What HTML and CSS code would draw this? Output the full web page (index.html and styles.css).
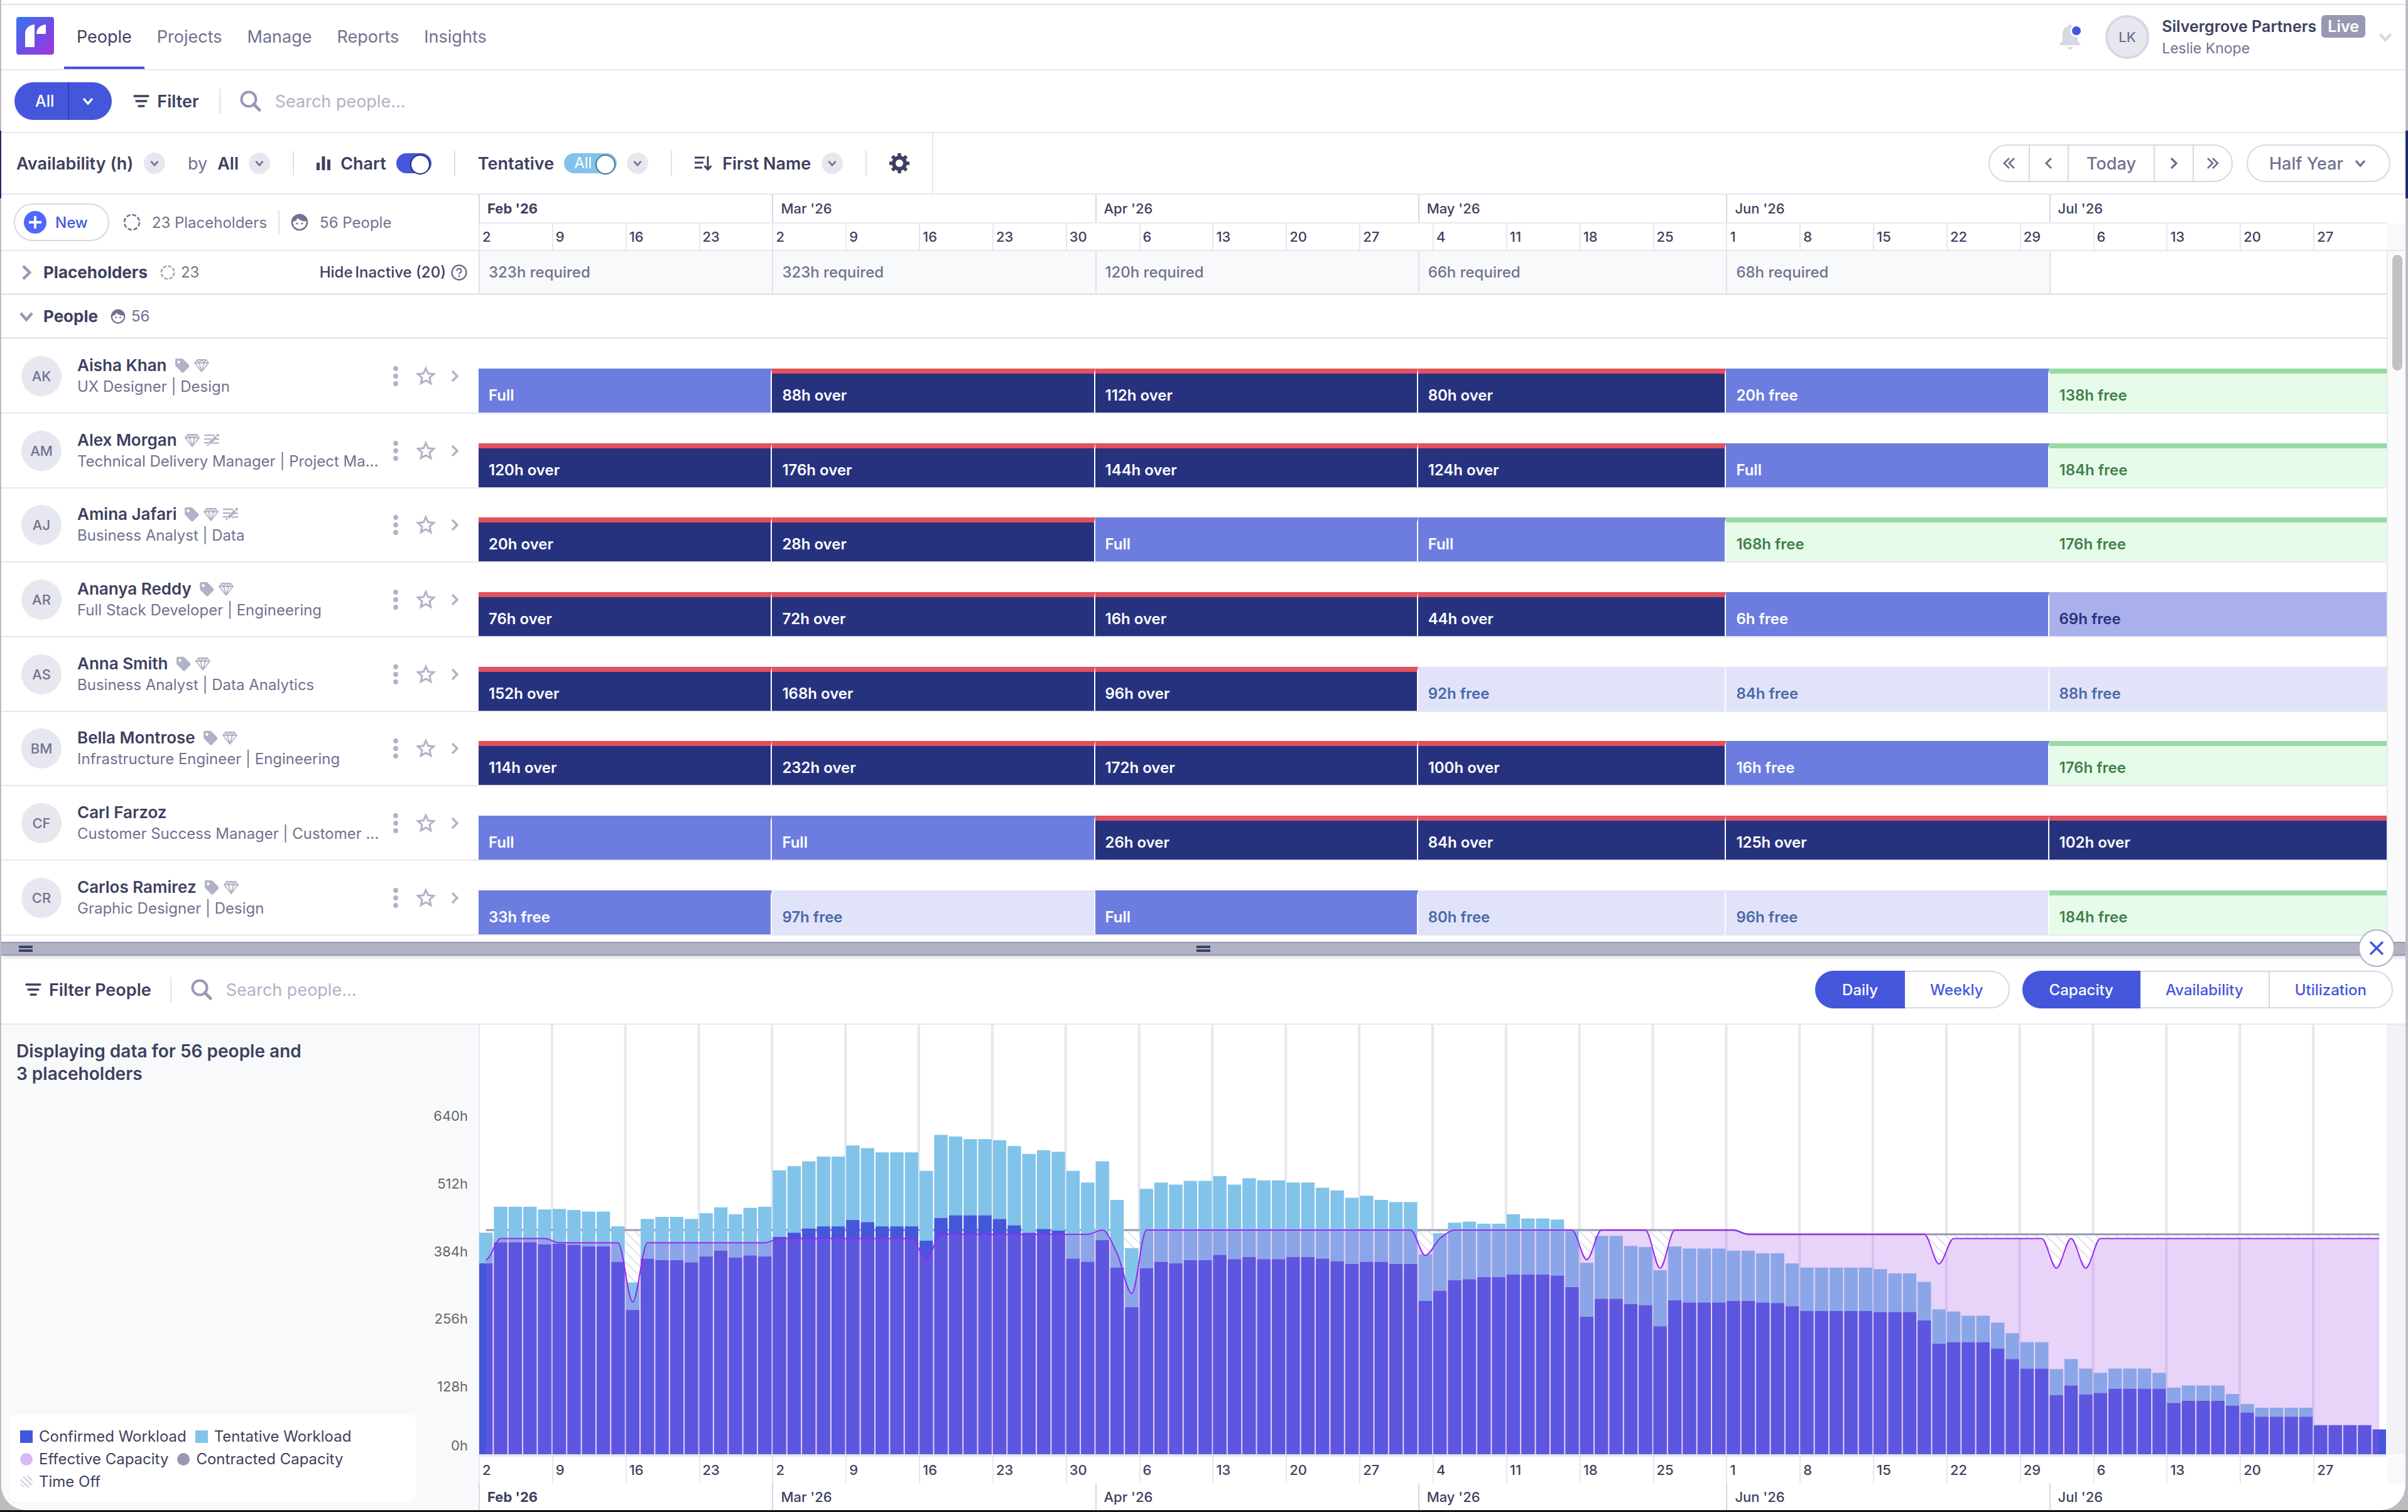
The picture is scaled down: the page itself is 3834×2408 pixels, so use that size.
FILE: index.html
```html
<!DOCTYPE html>
<html lang="en">
<head>
    <meta charset="UTF-8">
    <meta name="viewport" content="width=device-width, initial-scale=1.0">
    <title>People</title>
    <link rel="stylesheet" href="styles.css">
</head>
<body>
    <!-- Shared icons -->
    <svg class="sprite" aria-hidden="true">
        <symbol id="i-down" viewBox="0 0 20 20"><path d="M3 6l7 8 7-8" fill="none" stroke="currentColor" stroke-width="3.4"/></symbol>
        <symbol id="i-right" viewBox="0 0 20 20"><path d="M6 2l8 8-8 8" fill="none" stroke="currentColor" stroke-width="3.4"/></symbol>
        <symbol id="i-left" viewBox="0 0 20 20"><path d="M14 2l-8 8 8 8" fill="none" stroke="currentColor" stroke-width="3"/></symbol>
        <symbol id="i-dleft" viewBox="0 0 20 20"><path d="M10 2l-8 8 8 8M18 2l-8 8 8 8" fill="none" stroke="currentColor" stroke-width="2.8"/></symbol>
        <symbol id="i-dright" viewBox="0 0 20 20"><path d="M2 2l8 8-8 8M10 2l8 8-8 8" fill="none" stroke="currentColor" stroke-width="2.8"/></symbol>
        <symbol id="i-filter" viewBox="0 0 26 22"><path d="M2 3h22M5 11h16M9 19h8" fill="none" stroke="currentColor" stroke-width="3.4" stroke-linecap="round"/></symbol>
        <symbol id="i-search" viewBox="0 0 34 34"><circle cx="14" cy="14" r="11.5" fill="none" stroke="currentColor" stroke-width="4"/><path d="M22 22l9 9" stroke="currentColor" stroke-width="5" stroke-linecap="round"/></symbol>
        <symbol id="i-dashed" viewBox="0 0 28 28"><circle cx="14" cy="14" r="12" fill="none" stroke="currentColor" stroke-width="2.6" stroke-dasharray="6.6 2.82"/></symbol>
        <symbol id="i-face" viewBox="0 0 28 28"><circle cx="14" cy="14" r="12" fill="none" stroke="currentColor" stroke-width="2.6"/><path d="M2 13C7 13 10 10 11 7c3 4 8 6 15 5C25 5 20 1 14 1S3 6 2 13z" fill="currentColor"/><circle cx="10" cy="16" r="1.6" fill="currentColor"/><circle cx="18" cy="16" r="1.6" fill="currentColor"/></symbol>
        <symbol id="i-tag" viewBox="0 0 24 24"><path fill="currentColor" fill-rule="evenodd" d="M3 1h8.500a3 3 0 0 1 2.100.9l9 9.200a2.600 2.600 0 0 1 0 3.600l-7.800 8a2.600 2.600 0 0 1-3.700 0L2 13.500a3 3 0 0 1-.9-2.100V3a2 2 0 0 1 1.900-2zM6.500 4.300a2.300 2.300 0 1 0 0 4.600 2.300 2.300 0 0 0 0-4.600z"/></symbol>
        <symbol id="i-gem" viewBox="0 0 24 24"><path d="M5 3h14l4 5-11 14L1 8zM1 8h22M8 8l4 14 4-14M5 3l3 5 4-5 4 5 3-5" fill="none" stroke="currentColor" stroke-width="1.800" stroke-linejoin="round"/></symbol>
        <symbol id="i-note" viewBox="0 0 26 24"><path d="M1 3.500h16M1 10h10M1 16.500h6M20 10.500h5M16 17h9" stroke="currentColor" stroke-width="2.600" stroke-linecap="round"/><path d="M19 4.500l3.500 3.500L11 19.500 7.500 16zM6.500 17.500l2.500 3L4 23zM20.300 3.200l1.400-1.400a2.300 2.300 0 0 1 3.500 3.500L23.800 6.700z" fill="currentColor"/></symbol>
        <symbol id="i-star" viewBox="0 0 32 32"><path d="M16 3.500l3.700 8.300 9 .9-6.800 6 2 8.900L16 23l-7.900 4.600 2-8.900-6.800-6 9-.9z" fill="none" stroke="currentColor" stroke-width="3"/></symbol>
        <symbol id="i-dots" viewBox="0 0 8 32"><circle cx="4" cy="4" r="3.900" fill="currentColor"/><circle cx="4" cy="16" r="3.900" fill="currentColor"/><circle cx="4" cy="28" r="3.900" fill="currentColor"/></symbol>
    </svg>

    <div class="app">
        <header class="topbar">
            <svg class="logo" viewBox="0 0 60 60" aria-label="Logo">
                <defs><linearGradient id="logo-fill" x1="0" y1="0" x2="1" y2="1"><stop offset="0" stop-color="#3478f0"/><stop offset=".5" stop-color="#6a50e4"/><stop offset="1" stop-color="#a435dc"/></linearGradient></defs>
                <rect width="60" height="60" rx="4" fill="url(#logo-fill)"/>
                <path d="M14 48V27c0-8 5-14 15-15v36zM32 27c0-8 5-14 15-15v15z" fill="#fff"/>
            </svg>
            <nav class="tabs">
                <a href="#" class="tab active">People</a>
                <a href="#" class="tab">Projects</a>
                <a href="#" class="tab">Manage</a>
                <a href="#" class="tab">Reports</a>
                <a href="#" class="tab">Insights</a>
            </nav>
            <button class="bell" aria-label="Notifications">
                <svg viewBox="0 0 34 42"><path d="M16 1c2 0 3 1 3 3 6 1 9 6 9 12v11l4 4v3H0v-3l4-4V16C4 10 7 5 13 4c0-2 1-3 3-3zM12 37h8c0 5-8 5-8 0z" fill="#d6d8e4"/><circle cx="26" cy="11" r="10" fill="#fff"/><circle cx="26" cy="11" r="7" fill="#4457db"/></svg>
            </button>
            <span class="avatar me">LK</span>
            <div class="account">
                <div class="company">Silvergrove Partners <span class="live">Live</span></div>
                <div class="user">Leslie Knope</div>
            </div>
            <svg class="account-arrow"><use href="#i-down"/></svg>
        </header>

        <div class="filterbar">
            <div class="split">
                <button>All</button>
                <button aria-label="Saved filters"><svg class="ic20"><use href="#i-down"/></svg></button>
            </div>
            <button class="filter"><svg class="ic-filter"><use href="#i-filter"/></svg>Filter</button>
            <span class="bar"></span>
            <label class="search"><svg><use href="#i-search"/></svg><input type="text" placeholder="Search people..." aria-label="Search people"></label>
        </div>

        <div class="toolbar">
            <div class="tools">
                <label class="picker"><select aria-label="View"><option>Availability (h)</option></select><svg class="drop"><use href="#i-down"/></svg></label>
                <label class="picker"><span class="by">by</span><select><option>All</option></select><svg class="drop"><use href="#i-down"/></svg></label>
                <span class="bar"></span>
                <label class="picker">
                    <svg class="ic-chart" viewBox="0 0 22 22"><path d="M2.500 10v12M11 0v22M19.500 5v17" stroke="currentColor" stroke-width="5"/></svg>
                    Chart <input type="checkbox" class="toggle" checked>
                </label>
                <span class="bar"></span>
                <div class="picker">
                    <label class="picker tentative" for="tentative">Tentative</label>
                    <span class="toggle-wrap"><input type="checkbox" id="tentative" class="toggle wide" checked><span class="toggle-text">All</span></span>
                    <button class="drop-btn" aria-label="Tentative options"><svg class="drop"><use href="#i-down"/></svg></button>
                </div>
                <span class="bar"></span>
                <label class="picker">
                    <svg class="ic-sort" viewBox="0 0 28 24"><path d="M0 3h16M0 11h14M0 19h12M21 1v20M15.500 16l5.500 6 5.500-6" fill="none" stroke="currentColor" stroke-width="3"/></svg>
                    <select aria-label="Sort by"><option>First Name</option></select><svg class="drop"><use href="#i-down"/></svg>
                </label>
                <span class="bar"></span>
                <button class="gear" aria-label="Settings">
                    <svg viewBox="0 0 32 32"><circle cx="16" cy="16" r="9" fill="none" stroke="currentColor" stroke-width="6"/><path d="M16 0v7M16 25v7M0 16h7M25 16h7M4.700 4.700l5 5M22.300 22.300l5 5M4.700 27.300l5-5M22.300 9.700l5-5" stroke="currentColor" stroke-width="5.500"/></svg>
                </button>
            </div>
            <div class="range">
                <div class="pager">
                    <button aria-label="Back a page"><svg class="ic20"><use href="#i-dleft"/></svg></button>
                    <button aria-label="Back"><svg class="ic20"><use href="#i-left"/></svg></button>
                    <button class="today">Today</button>
                    <button aria-label="Forward"><svg class="ic20"><use href="#i-right"/></svg></button>
                    <button aria-label="Forward a page"><svg class="ic20"><use href="#i-dright"/></svg></button>
                </div>
                <label class="zoom"><select aria-label="Zoom"><option>Half Year</option></select><svg class="ic20"><use href="#i-down"/></svg></label>
            </div>
        </div>

        <div class="timeline-head">
            <div class="summary">
                <button class="new"><svg viewBox="0 0 36 36"><circle cx="18" cy="18" r="18" fill="#4f68fa"/><path d="M18 8v20M8 18h20" stroke="#fff" stroke-width="4"/></svg>New</button>
                <span class="count"><svg class="ic28"><use href="#i-dashed"/></svg>23 Placeholders</span>
                <span class="bar"></span>
                <span class="count"><svg class="ic28"><use href="#i-face"/></svg>56 People</span>
            </div>
            <div class="calendar">
                <div class="months"></div>
                <div class="weeks"></div>
            </div>
            <div class="gutter"></div>
        </div>

        <div class="list">
            <table class="schedule">
                <tbody>
                    <tr class="group">
                        <th>
                            <svg class="fold"><use href="#i-right"/></svg>
                            <span class="group-name">Placeholders</span>
                            <svg class="ic24 pale"><use href="#i-dashed"/></svg><span class="group-count">23</span>
                            <button class="hide"><span>Hide</span><span>Inactive (20)</span></button>
                            <svg class="help" viewBox="0 0 26 26"><circle cx="13" cy="13" r="11.500" fill="none" stroke="currentColor" stroke-width="2.400"/><path d="M9.500 10.500a3.500 3.500 0 1 1 5 3c-1.200.7-1.500 1.200-1.500 2.500" fill="none" stroke="currentColor" stroke-width="2.200"/><circle cx="13" cy="19" r="1.400" fill="currentColor"/></svg>
                        </th>
                        <td>323h required</td>
                        <td>323h required</td>
                        <td>120h required</td>
                        <td>66h required</td>
                        <td>68h required</td>
                        <td class="none"></td>
                    </tr>
                    <tr class="group">
                        <th>
                            <svg class="fold"><use href="#i-down"/></svg>
                            <span class="group-name">People</span>
                            <svg class="ic24"><use href="#i-face"/></svg><span class="group-count">56</span>
                        </th>
                    </tr>
                </tbody>
                <tbody id="people"></tbody>
            </table>
            <div class="scroll"><div class="thumb"></div></div>
        </div>

        <div class="splitter">
            <span class="grip"></span>
            <span class="grip middle"></span>
            <button class="close" aria-label="Close chart"><svg viewBox="0 0 24 24"><path d="M2 2l20 20M22 2L2 22" stroke="#4457db" stroke-width="3.600"/></svg></button>
        </div>

        <div class="chartbar">
            <button class="filter"><svg class="ic-filter"><use href="#i-filter"/></svg>Filter People</button>
            <span class="bar"></span>
            <label class="search"><svg><use href="#i-search"/></svg><input type="text" placeholder="Search people..." aria-label="Search people in chart"></label>
            <div class="segments">
                <button class="on">Daily</button>
                <button>Weekly</button>
            </div>
            <div class="segments">
                <button class="on">Capacity</button>
                <button>Availability</button>
                <button>Utilization</button>
            </div>
        </div>

        <div class="chart">
            <div class="side">
                <h2>Displaying data for 56 people and<br>3 placeholders</h2>
                <ul class="legend">
                    <li><i class="key confirmed"></i>Confirmed Workload</li>
                    <li><i class="key tent"></i>Tentative Workload</li>
                    <li><i class="key effective"></i>Effective Capacity</li>
                    <li><i class="key contracted"></i>Contracted Capacity</li>
                    <li><i class="key timeoff"></i>Time Off</li>
                </ul>
            </div>
            <div class="axis">
                <span>640h</span>
                <span>512h</span>
                <span>384h</span>
                <span>256h</span>
                <span>128h</span>
                <span>0h</span>
            </div>
            <svg id="plot" viewBox="0 0 3038 684" preserveAspectRatio="none"></svg>
            <div class="plot-gutter"></div>
            <div class="calendar bottom">
                <div class="weeks"></div>
                <div class="months"></div>
            </div>
            <div class="gutter"></div>
        </div>
    </div>

    <script src="script.js"></script>
</body>
</html>
```
FILE: styles.css
```css
* {
    box-sizing: border-box;
}
body {
    margin: 0;
    min-height: 100vh;
    display: flex;
    flex-direction: column;
    padding: 0 4px 3px 2px;
    font-family: Inter, "Liberation Sans", sans-serif;
    font-size: 24px;
    color: #3d4160;
    background: linear-gradient(#1f2a6b, #1f2a6b) 0 208px / 100% 108px no-repeat,
        linear-gradient(#111, #111) 0 100% / 100% 3px no-repeat, #bdbdc1;
}
button, select, input {
    font: inherit;
    color: inherit;
    background: none;
    border: 0;
    padding: 0;
    margin: 0;
    appearance: none;
    outline: 0;
}
button {
    display: flex;
    align-items: center;
    justify-content: center;
    cursor: pointer;
}
svg {
    display: block;
    flex: none;
}
.sprite {
    display: none;
}
.ic20 {
    width: 20px;
    height: 20px;
}
.ic24 {
    width: 24px;
    height: 24px;
}
.ic28 {
    width: 28px;
    height: 28px;
}
.app {
    flex: 1;
    display: flex;
    flex-direction: column;
    background: #fff;
    border-radius: 0 0 40px 40px;
    overflow: hidden;
    padding-top: 6px;
}
.bar {
    width: 2px;
    height: 40px;
    background: #e0e1eb;
}

/* Top navigation */
.topbar {
    display: flex;
    align-items: center;
    height: 106px;
    padding: 0 20px 0 24px;
    border-top: 2px solid #e2e2e4;
    border-bottom: 2px solid #e7e7ef;
}
.logo {
    width: 60px;
    height: 60px;
    margin-right: 16px;
    margin-bottom: 4px;
}
.tabs {
    display: flex;
    align-self: stretch;
    flex: 1;
    font-size: 27px;
}
.tab {
    display: flex;
    align-items: center;
    padding: 2px 20px 0;
    color: #70728f;
    text-decoration: none;
    border-bottom: 4px solid transparent;
}
.tab.active {
    color: #3d4160;
    border-color: #4457db;
}
.bell svg {
    width: 34px;
    height: 42px;
}
.avatar {
    display: flex;
    align-items: center;
    justify-content: center;
    flex: none;
    width: 64px;
    height: 64px;
    border-radius: 50%;
    background: #e7e7ef;
    color: #70728f;
    font-size: 22px;
    font-weight: 500;
}
.avatar.me {
    width: 70px;
    height: 70px;
    border: 4px solid #d6d8e4;
    margin: 0 20px 0 38px;
}
.account {
    line-height: 36px;
}
.company {
    display: flex;
    gap: 8px;
    font-size: 25px;
    font-weight: 600;
}
.live {
    padding: 0 10px;
    border-radius: 6px;
    background: #9799b3;
    color: #fff;
}
.user {
    color: #70728f;
    font-size: 23px;
    line-height: 34px;
}
.account-arrow {
    width: 24px;
    height: 24px;
    margin-left: 20px;
    color: #d6d8e4;
}

/* Filter row */
.filterbar {
    display: flex;
    align-items: center;
    height: 100px;
    padding: 0 21px;
    border-bottom: 2px solid #e7e7ef;
}
.split {
    display: flex;
    height: 60px;
    border-radius: 30px;
    background: #4457db;
    color: #fff;
    font-size: 25px;
    font-weight: 500;
}
.split button {
    padding: 0 22px 0 33px;
}
.split button + button {
    padding: 0 28px 0 20px;
    border-left: 2px solid #2c3fbe;
}
.filter {
    gap: 12px;
    margin: 0 32px 0 34px;
    font-weight: 600;
    font-size: 27px;
}
.ic-filter {
    width: 26px;
    height: 22px;
}
.search {
    display: flex;
    align-items: center;
    flex: 1;
    gap: 22px;
    margin-left: 31px;
    color: #9799b3;
}
.search svg {
    width: 34px;
    height: 34px;
}
.search input {
    width: 400px;
    font-size: 27px;
}
.search input::placeholder {
    color: #b0b2c6;
    opacity: 1;
}

/* View toolbar */
.toolbar {
    display: flex;
    justify-content: space-between;
    height: 98px;
    border-bottom: 2px solid #e7e7ef;
}
.tools {
    display: flex;
    align-items: center;
    gap: 36px;
    padding: 0 36px 0 24px;
    border-right: 2px solid #e7e7ef;
    font-size: 27px;
    font-weight: 600;
}
.picker {
    display: flex;
    align-items: center;
    gap: 16px;
}
.by {
    font-weight: 400;
    color: #70728f;
}
.drop {
    width: 34px;
    height: 34px;
    padding: 9px;
    border-radius: 50%;
    background: #e7e7ef;
    color: #70728f;
}
.ic-chart {
    width: 22px;
    height: 22px;
}
.ic-sort {
    width: 28px;
    height: 24px;
}
.toggle {
    display: block;
    width: 56px;
    height: 32px;
    padding: 2px;
    border-radius: 16px;
    background: #4457db;
}
.toggle::after {
    content: "";
    display: block;
    width: 28px;
    height: 28px;
    margin-left: auto;
    border: 2px solid #27327f;
    border-radius: 50%;
    background: #fff;
}
.toggle.wide {
    width: 84px;
    background: #82c3e9;
}
.toggle.wide::after {
    border-color: #47788f;
}
.toggle-wrap {
    position: relative;
}
.toggle-text {
    position: absolute;
    left: 16px;
    top: 0;
    line-height: 32px;
    font-size: 24px;
    font-weight: 400;
    color: #fff;
    pointer-events: none;
}
.gear svg {
    width: 32px;
    height: 32px;
}
.range {
    display: flex;
    align-items: center;
    gap: 22px;
    padding-right: 24px;
    color: #70728f;
    font-size: 27px;
    font-weight: 500;
}
.pager, .zoom, .segments {
    display: flex;
    height: 60px;
    border: 2px solid #d6d8e4;
    border-radius: 30px;
}
.pager button {
    width: 62px;
}
.pager button + button {
    border-left: 2px solid #d6d8e4;
}
.pager .today {
    width: 137px;
}
.zoom {
    align-items: center;
    gap: 16px;
    padding: 0 36px 0 34px;
}

/* Calendar header */
.timeline-head {
    display: grid;
    grid-template-columns: 760px 1fr 30px;
    height: 90px;
    border-bottom: 2px solid #e7e7ef;
}
.summary {
    display: flex;
    align-items: center;
    gap: 18px;
    padding-left: 20px;
    color: #70728f;
}
.new {
    gap: 14px;
    height: 60px;
    margin-right: 4px;
    padding: 0 32px 0 14px;
    border: 2px solid #d6d8e4;
    border-radius: 30px;
    color: #4457db;
    font-weight: 500;
}
.new svg {
    width: 36px;
    height: 36px;
}
.count {
    display: flex;
    align-items: center;
    gap: 18px;
}
.months {
    display: grid;
    grid-template-columns: 20fr 22fr 22fr 21fr 22fr 23fr;
    height: 46px;
    line-height: 44px;
    font-size: 22px;
    font-weight: 500;
    border-bottom: 2px solid #e7e7ef;
}
.months span {
    padding-left: 14px;
    box-shadow: inset 2px 0 #d6d8e4;
}
.months span:first-child {
    font-weight: 700;
}
.weeks {
    display: grid;
    grid-template-columns: repeat(26, 1fr);
    height: 42px;
    line-height: 42px;
    font-size: 22px;
    font-weight: 500;
}
.weeks span {
    padding-left: 6px;
    box-shadow: inset 2px 0 #e7e7ef;
}
.gutter {
    height: 42px;
    background: #f8f9fb;
}
.timeline-head .gutter {
    align-self: end;
}

/* Schedule */
.list {
    display: flex;
}
.schedule {
    display: block;
    flex: 1;
    padding-bottom: 10px;
}
.schedule tbody {
    display: block;
}
.schedule tr {
    display: grid;
    grid-template-columns: 760px 20fr 22fr 22fr 21fr 22fr 23fr;
    height: 119px;
    border-bottom: 2px solid #e7e7ef;
}
.schedule tr:nth-child(3n) {
    height: 118px;
}
.schedule th {
    display: flex;
    align-items: center;
    padding: 0 28px 0 32px;
    font-weight: 400;
    text-align: left;
}
.schedule td {
    padding: 0 0 0 16px;
    white-space: nowrap;
}
.schedule tr.group {
    height: 70px;
    border-bottom-width: 3px;
}
.group td {
    background: #f8f9fb;
    box-shadow: inset 2px 0 #e0e1eb;
    line-height: 67px;
    color: #70728f;
    font-weight: 500;
}
.group td.none {
    background: #fff;
}
.schedule tr.group th {
    padding: 0 18px 0 27px;
}
.fold {
    width: 26px;
    height: 26px;
    margin-right: 14px;
    color: #9799b3;
}
.group-name {
    margin-right: 20px;
    font-size: 26px;
    font-weight: 700;
}
.group .ic24 {
    margin-right: 9px;
    color: #70728f;
}
.group .ic24.pale {
    color: #9799b3;
}
.group-count {
    flex: 1;
    color: #70728f;
}
.hide {
    gap: 4px;
    font-weight: 500;
}
.help {
    width: 26px;
    height: 26px;
    margin-left: 8px;
    color: #70728f;
}
.who {
    flex: 1;
    min-width: 0;
    margin: 0 16px 0 25px;
    line-height: 34px;
}
.name {
    display: flex;
    align-items: center;
    gap: 7px;
    font-size: 26px;
    font-weight: 600;
}
.name span {
    margin-right: 5px;
}
.name svg {
    width: 24px;
    height: 24px;
    color: #b0b2c6;
}
.role {
    overflow: hidden;
    white-space: nowrap;
    text-overflow: ellipsis;
    color: #70728f;
}
.row-actions {
    display: flex;
    align-items: center;
    color: #b0b2c6;
}
.dots {
    width: 8px;
    height: 32px;
}
.star {
    width: 32px;
    height: 32px;
    margin: 0 20px 0 28px;
}
.schedule td.over, .schedule td.full, .schedule td.some, .schedule td.light, .schedule td.free {
    align-self: end;
    height: 70px;
    padding-top: 8px;
    line-height: 54px;
    border-top: 8px solid #6d7ddf;
    border-right: 2px solid #fff;
    background: #6d7ddf;
    color: #fff;
    font-weight: 600;
}
.schedule td.over {
    border-top-color: #e2515d;
    background: #27327f;
}
.schedule td.some {
    border-top-color: #a9b0eb;
    background: #a9b0eb;
    color: #27327f;
}
.schedule td.light {
    border-top-color: #e1e4f9;
    background: #e1e4f9;
    color: #4b68a8;
}
.schedule td.free {
    border-top-color: #97daa3;
    background: #e7fbeb;
    color: #3f8049;
}
.schedule td.free, .schedule td:last-child {
    border-right: 0;
}
.scroll {
    width: 30px;
    padding: 6px 5px 0 7px;
    background: #fafafa;
    border-left: 2px solid #e8e8e8;
}
.thumb {
    height: 184px;
    border-radius: 8px;
    background: #c1c1c1;
}

/* Splitter between schedule and chart */
.splitter {
    position: relative;
    z-index: 1;
    display: flex;
    align-items: center;
    height: 22px;
    padding-left: 28px;
    background: #b0b2c6;
    border: solid #9799b3;
    border-width: 2px 0;
    box-shadow: 0 3px 6px rgba(0, 0, 0, 0.15);
}
.grip {
    width: 22px;
    height: 10px;
    border: solid #3d4160;
    border-width: 4px 0;
}
.grip.middle {
    position: absolute;
    left: 50%;
    margin-left: -11px;
}
.close {
    position: absolute;
    right: 17px;
    top: -22px;
    width: 58px;
    height: 60px;
    border: 2px solid #b0b2c6;
    border-radius: 50%;
    background: #fff;
}
.close svg {
    width: 24px;
    height: 24px;
}

/* Chart */
.chartbar {
    display: flex;
    align-items: center;
    gap: 20px;
    height: 110px;
    padding: 0 20px 0 38px;
    border-bottom: 2px solid #e7e7ef;
}
.chartbar .filter {
    margin: 0 10px 0 0;
}
.chartbar .search {
    margin-left: 11px;
}
.segments {
    color: #4457db;
    font-weight: 500;
}
.segments button {
    padding: 0 40px;
}
.segments button + button + button {
    border-left: 2px solid #d6d8e4;
}
.segments .on {
    margin: -2px 0 -2px -2px;
    padding: 0 43px;
    border-radius: 30px 0 0 30px;
    background: #4457db;
    color: #fff;
}
.chart {
    flex: 1;
    display: grid;
    grid-template-columns: 760px 1fr 30px;
    grid-template-rows: 1fr auto;
}
.side {
    grid-area: 1 / 1 / 3 / 2;
    display: flex;
    flex-direction: column;
    justify-content: space-between;
    padding: 24px 100px 13px 14px;
    background: #f8f9fb;
}
.side h2 {
    margin: 0 0 0 10px;
    font-size: 28px;
    font-weight: 600;
    line-height: 36px;
}
.legend {
    display: flex;
    flex-wrap: wrap;
    column-gap: 14px;
    margin: 0;
    padding: 18px 16px 14px;
    border-radius: 10px;
    background: #fff;
    list-style: none;
    line-height: 36px;
}
.legend li {
    display: flex;
    align-items: center;
    gap: 10px;
}
.legend li:last-child {
    width: 100%;
}
.key {
    width: 20px;
    height: 20px;
}
.key.confirmed {
    background: #4457db;
}
.key.tent {
    background: #82c3e9;
}
.key.effective, .key.contracted, .key.timeoff {
    border-radius: 50%;
    background: #d9b8f5;
}
.key.contracted {
    background: #9799b3;
}
.key.timeoff {
    background: repeating-linear-gradient(45deg, #fff 0 3px, #d6d8e4 3px 6px);
}
.axis {
    grid-area: 1 / 1;
    justify-self: end;
    display: flex;
    flex-direction: column;
    justify-content: flex-end;
    padding-right: 17px;
    color: #666;
    font-size: 22px;
    line-height: 28px;
    text-align: right;
}
.axis span {
    display: flex;
    align-items: center;
    justify-content: flex-end;
    flex: 0 0 15.76%;
}
.axis span:last-child {
    flex-basis: 7.88%;
    align-items: flex-end;
}
#plot {
    grid-area: 1 / 2;
    width: 100%;
    height: 100%;
    min-height: 0;
}
.plot-gutter {
    background: #f2f3f6;
}
.bottom {
    border-top: 4px solid #e7e7ef;
}
.bottom .months {
    height: 43px;
    border-bottom: 0;
}
.chart .gutter {
    margin-top: 4px;
}

/* Chart series */
.grid-line {
    stroke: #e7e7ef;
    stroke-width: 4;
}
.bar-confirmed {
    fill: #4457db;
}
.bar-tentative {
    fill: #82c3e9;
}
.capacity-area {
    fill: rgba(165, 85, 230, 0.257);
}
.capacity-line {
    fill: none;
    stroke: #9a26f2;
    stroke-width: 2;
}
.contracted-line {
    fill: none;
    stroke: #9799b3;
    stroke-width: 3;
}
```
FILE: script.js
```js
// Calendar labels, shared by the header and the chart axis
var months = ["Feb '26", "Mar '26", "Apr '26", "May '26", "Jun '26", "Jul '26"];
var weeks = [2, 9, 16, 23, 2, 9, 16, 23, 30, 6, 13, 20, 27, 4, 11, 18, 25, 1, 8, 15, 22, 29, 6, 13, 20, 27];

function fill(selector, items) {
    document.querySelectorAll(selector).forEach(function (el) {
        el.innerHTML = items.map(function (t) { return '<span>' + t + '</span>'; }).join('');
    });
}
fill('.months', months);
fill('.weeks', weeks);

// People rows: name, role, icons, cells (o = over, f = full, s = some, l = light, g = free)
var people = [
    ['Aisha Khan', 'UX Designer | Design', 'tag gem', 'f:Full,o:88h over,o:112h over,o:80h over,f:20h free,g:138h free'],
    ['Alex Morgan', 'Technical Delivery Manager | Project Management', 'gem note', 'o:120h over,o:176h over,o:144h over,o:124h over,f:Full,g:184h free'],
    ['Amina Jafari', 'Business Analyst | Data', 'tag gem note', 'o:20h over,o:28h over,f:Full,f:Full,g:168h free,g:176h free'],
    ['Ananya Reddy', 'Full Stack Developer | Engineering', 'tag gem', 'o:76h over,o:72h over,o:16h over,o:44h over,f:6h free,s:69h free'],
    ['Anna Smith', 'Business Analyst | Data Analytics', 'tag gem', 'o:152h over,o:168h over,o:96h over,l:92h free,l:84h free,l:88h free'],
    ['Bella Montrose', 'Infrastructure Engineer | Engineering', 'tag gem', 'o:114h over,o:232h over,o:172h over,o:100h over,f:16h free,g:176h free'],
    ['Carl Farzoz', 'Customer Success Manager | Customer Success', '', 'f:Full,f:Full,o:26h over,o:84h over,o:125h over,o:102h over'],
    ['Carlos Ramirez', 'Graphic Designer | Design', 'tag gem', 'f:33h free,l:97h free,f:Full,l:80h free,l:96h free,g:184h free']
];
var kinds = { o: 'over', f: 'full', s: 'some', l: 'light', g: 'free' };

document.getElementById('people').innerHTML = people.map(function (p) {
    var initials = p[0].split(' ').map(function (w) { return w[0]; }).join('');
    var icons = p[2].split(' ').filter(Boolean).map(function (n) {
        return '<svg><use href="#i-' + n + '"/></svg>';
    }).join('');
    var cells = p[3].split(',').map(function (c) {
        var part = c.split(':');
        return '<td class="' + kinds[part[0]] + '">' + part[1] + '</td>';
    }).join('');
    return '<tr><th><span class="avatar">' + initials + '</span>' +
        '<div class="who"><div class="name"><span>' + p[0] + '</span>' + icons + '</div><div class="role">' + p[1] + '</div></div>' +
        '<div class="row-actions"><button aria-label="More"><svg class="dots"><use href="#i-dots"/></svg></button>' +
        '<button aria-label="Favourite"><svg class="star"><use href="#i-star"/></svg></button>' +
        '<button aria-label="Expand"><svg class="ic20"><use href="#i-right"/></svg></button></div></th>' + cells + '</tr>';
}).join('');

// Daily workload in hours: [days, total, confirmed]
var load = [
    [1, 419, 361], [3, 468, 401], [1, 463, 397], [1, 464, 398], [1, 462, 396], [2, 459, 393], [1, 431, 364],
    [1, 325, 273], [1, 445, 370], [2, 449, 367], [1, 445, 363], [1, 456, 374], [1, 467, 385], [1, 454, 372],
    [1, 466, 376], [1, 468, 374], [1, 537, 411], [1, 545, 419], [1, 554, 427], [2, 563, 431], [1, 584, 443],
    [1, 579, 439], [3, 571, 431], [1, 536, 404], [1, 604, 447], [1, 601, 452], [2, 596, 452], [1, 594, 445],
    [1, 583, 433], [1, 568, 419], [1, 575, 426], [1, 572, 423], [1, 536, 370], [1, 514, 364], [1, 554, 405],
    [1, 481, 353], [1, 390, 278], [1, 502, 352], [1, 514, 364], [1, 510, 361], [2, 517, 367], [1, 526, 377],
    [1, 510, 369], [1, 522, 373], [2, 518, 369], [2, 514, 373], [1, 504, 370], [1, 499, 365], [1, 485, 360],
    [1, 489, 364], [1, 481, 364], [2, 477, 360], [1, 378, 290], [1, 418, 309], [1, 438, 329], [1, 440, 331],
    [2, 436, 335], [1, 454, 340], [2, 446, 340], [1, 444, 338], [1, 422, 316], [1, 362, 260], [2, 413, 294],
    [1, 394, 284], [1, 392, 282], [1, 348, 242], [1, 393, 291], [3, 389, 287], [2, 385, 290], [1, 380, 287],
    [1, 380, 286], [1, 361, 280], [5, 353, 271], [1, 350, 269], [2, 342, 269], [1, 326, 253], [1, 274, 209],
    [1, 270, 212], [2, 262, 212], [1, 249, 200], [1, 229, 180], [2, 212, 162], [1, 161, 112], [1, 180, 130],
    [1, 162, 113], [1, 154, 116], [3, 162, 124], [1, 154, 124], [1, 126, 97], [3, 130, 101], [1, 114, 92],
    [1, 95, 79], [4, 88, 71], [4, 55, 55], [1, 47, 47]
];
// Capacity in hours: [days, hours]
var effective = [
    [1, 368], [4, 408], [5, 400], [1, 288], [9, 400], [10, 408], [1, 368], [11, 416], [1, 424], [1, 380], [1, 304],
    [19, 424], [1, 376], [1, 408], [9, 424], [1, 368], [4, 424], [1, 352], [5, 424], [13, 416], [1, 360], [7, 408],
    [1, 352], [1, 408], [1, 352], [20, 408]
];
var contracted = [[86, 424], [44, 416]];

var W = 3038, H = 684, DAY = W / 130, SCALE = 0.842;

function y(hours) { return H - hours * SCALE; }

function points(runs) {
    var out = [];
    runs.forEach(function (r) {
        for (var i = 0; i < r[0]; i++) out.push([(out.length + 0.5) * DAY, y(r[1])]);
    });
    return out;
}

// Monotone cubic curve through the points
function curve(p) {
    function slope(i) {
        if (i === 0 || i === p.length - 1) return 0;
        var a = (p[i][1] - p[i - 1][1]) / DAY, b = (p[i + 1][1] - p[i][1]) / DAY;
        return a * b <= 0 ? 0 : 2 * a * b / (a + b);
    }
    var d = '';
    for (var i = 1; i < p.length; i++) {
        var k = DAY / 3;
        d += 'C' + [p[i - 1][0] + k, p[i - 1][1] + slope(i - 1) * k, p[i][0] - k, p[i][1] - slope(i) * k, p[i][0], p[i][1]].join(' ');
    }
    return d;
}

var eff = points(effective), con = points(contracted);
var effLine = 'M' + eff[0].join(' ') + curve(eff);
var conLine = 'M' + con[0].join(' ') + curve(con);

var svg = '<defs><pattern id="hatch" width="16" height="16" patternUnits="userSpaceOnUse"><rect width="16" height="16" fill="#fff"/>' +
    '<path d="M-2 -2L18 18M-2 14L2 18M14 -2L18 2" stroke="#e0e1eb" stroke-width="2"/></pattern>' +
    '<clipPath id="above"><path d="' + effLine + 'V0H' + eff[0][0] + 'Z"/></clipPath></defs>';
for (var w = 0; w < 26; w++) {
    svg += '<line class="grid-line" x1="' + w * 5 * DAY + '" x2="' + w * 5 * DAY + '" y1="0" y2="' + H + '"/>';
}
svg += '<path d="' + conLine + 'V' + H + 'H' + con[0][0] + 'Z" fill="url(#hatch)" clip-path="url(#above)"/>';
svg += '<path class="contracted-line" d="' + conLine + '"/>';
var day = 0;
load.forEach(function (r) {
    for (var i = 0; i < r[0]; i++, day++) {
        var x = day * DAY + 1, bw = DAY - 2;
        svg += '<rect class="bar-tentative" x="' + x + '" y="' + y(r[1]) + '" width="' + bw + '" height="' + (r[1] - r[2]) * SCALE + '"/>';
        svg += '<rect class="bar-confirmed" x="' + x + '" y="' + y(r[2]) + '" width="' + bw + '" height="' + r[2] * SCALE + '"/>';
    }
});
svg += '<path class="capacity-area" d="' + effLine + 'V' + H + 'H' + eff[0][0] + 'Z"/>';
svg += '<path class="capacity-line" d="' + effLine + '"/>';
document.getElementById('plot').innerHTML = svg;
```
